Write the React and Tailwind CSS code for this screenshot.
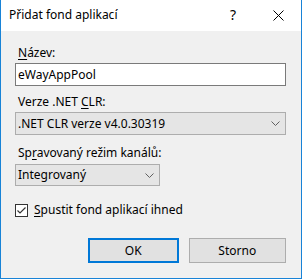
import React from "react";

const font = { fontFamily: '"Noto Sans", "Open Sans", sans-serif' };

function Chevron() {
  return (
    <svg width="9" height="5" viewBox="0 0 9 5" className="block">
      <polyline points="0.5,0.5 4.5,4.5 8.5,0.5" fill="none" stroke="#606060" strokeWidth="1" />
    </svg>
  );
}

export default function App() {
  return (
    <div
      className="w-[302px] h-[279px] flex flex-col border-l border-r border-b border-[#1883d7] bg-[#f0f0f0] text-[12px] text-black"
      style={font}
    >
      <div className="h-[31px] bg-white flex items-center pl-[8px] relative">
        <span className="leading-[16px] mt-[-1px]">Přidat fond aplikací</span>
        <span className="absolute left-[229px] top-[6px] text-[14px] leading-[18px]">?</span>
        <svg className="absolute left-[272px] top-[10px]" width="11" height="11" viewBox="0 0 11 11">
          <line x1="0.5" y1="0.5" x2="10.5" y2="10.5" stroke="#000" strokeWidth="1" />
          <line x1="10.5" y1="0.5" x2="0.5" y2="10.5" stroke="#000" strokeWidth="1" />
        </svg>
      </div>
      <div className="flex-1 flex flex-col pl-[14px] pr-[15px]">
        <div className="mt-[14px] leading-[16px] pl-[3px]">
          <u className="underline-offset-[2px]">N</u>ázev:
        </div>
        <div className="mt-[2px] h-[23px] w-[271px] bg-white border border-[#7a7a7a] flex items-center pl-[2px] leading-[16px]">
          eWayAppPool
        </div>
        <div className="mt-[8px] leading-[16px] pl-[3px]">
          Verze .NET <u className="underline-offset-[2px]">C</u>LR:
        </div>
        <div className="mt-[2px] h-[23px] w-[271px] bg-[#e5e5e5] border border-[#adadad] flex items-center justify-between pl-[2px] pr-[5px] leading-[16px]">
          <span>.NET CLR verze v4.0.30319</span>
          <Chevron />
        </div>
        <div className="mt-[10px] leading-[16px] pl-[3px]">
          Sp<u className="underline-offset-[2px]">r</u>avovaný režim kanálů:
        </div>
        <div className="mt-[3px] h-[22px] w-[145px] bg-[#e5e5e5] border border-[#adadad] flex items-center justify-between pl-[2px] pr-[5px] leading-[16px]">
          <span>Integrovaný</span>
          <Chevron />
        </div>
        <div className="mt-[17px] flex items-center h-[14px]">
          <div className="w-[13px] h-[13px] bg-white border border-[#333333] flex items-center justify-center">
            <svg width="11" height="11" viewBox="0 0 11 11">
              <polyline points="1.5,5.5 4,8 9.5,2.5" fill="none" stroke="#333333" strokeWidth="1.2" />
            </svg>
          </div>
          <span className="ml-[6px] leading-[16px]">
            <u className="underline-offset-[2px]">S</u>pustit fond aplikací ihned
          </span>
        </div>
        <div className="mt-[21px] flex">
          <button className="ml-[73px] w-[91px] h-[25px] bg-[#e1e1e1] border-2 border-[#0078d7] flex items-center justify-center leading-[16px]">
            OK
          </button>
          <button className="ml-[10px] w-[98px] h-[25px] bg-[#e1e1e1] border border-[#adadad] flex items-center justify-center leading-[16px]">
            Storno
          </button>
        </div>
      </div>
    </div>
  );
}
